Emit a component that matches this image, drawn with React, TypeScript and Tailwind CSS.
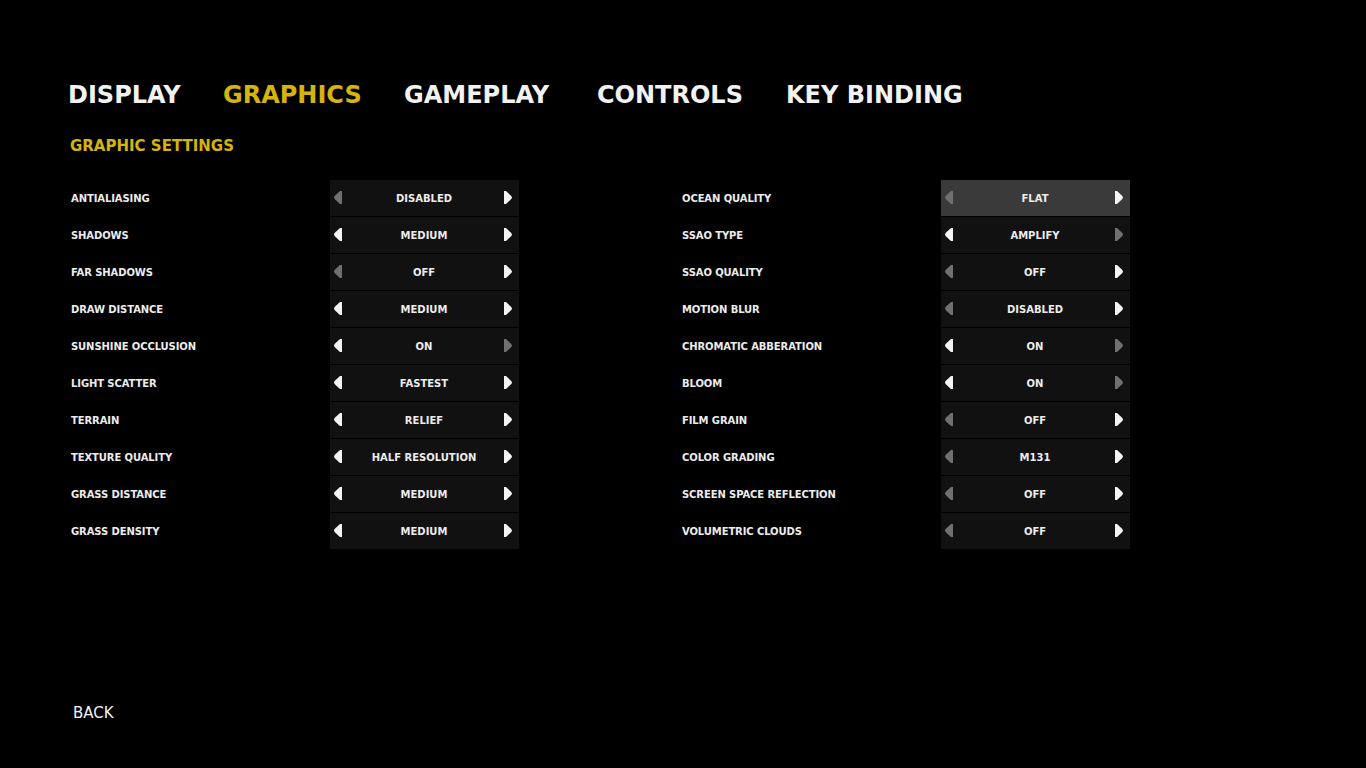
import React from "react";

type Row = { label: string; value: string; left: boolean; right: boolean; selected?: boolean };

const leftRows: Row[] = [
  { label: "ANTIALIASING", value: "DISABLED", left: false, right: true },
  { label: "SHADOWS", value: "MEDIUM", left: true, right: true },
  { label: "FAR SHADOWS", value: "OFF", left: false, right: true },
  { label: "DRAW DISTANCE", value: "MEDIUM", left: true, right: true },
  { label: "SUNSHINE OCCLUSION", value: "ON", left: true, right: false },
  { label: "LIGHT SCATTER", value: "FASTEST", left: true, right: true },
  { label: "TERRAIN", value: "RELIEF", left: true, right: true },
  { label: "TEXTURE QUALITY", value: "HALF RESOLUTION", left: true, right: true },
  { label: "GRASS DISTANCE", value: "MEDIUM", left: true, right: true },
  { label: "GRASS DENSITY", value: "MEDIUM", left: true, right: true },
];

const rightRows: Row[] = [
  { label: "OCEAN QUALITY", value: "FLAT", left: false, right: true, selected: true },
  { label: "SSAO TYPE", value: "AMPLIFY", left: true, right: false },
  { label: "SSAO QUALITY", value: "OFF", left: false, right: true },
  { label: "MOTION BLUR", value: "DISABLED", left: false, right: true },
  { label: "CHROMATIC ABBERATION", value: "ON", left: true, right: false },
  { label: "BLOOM", value: "ON", left: true, right: false },
  { label: "FILM GRAIN", value: "OFF", left: false, right: true },
  { label: "COLOR GRADING", value: "M131", left: false, right: true },
  { label: "SCREEN SPACE REFLECTION", value: "OFF", left: false, right: true },
  { label: "VOLUMETRIC CLOUDS", value: "OFF", left: false, right: true },
];

function Arrow({ dir, active }: { dir: "left" | "right"; active: boolean }) {
  const d =
    dir === "left"
      ? "M8 0 L8 13 L6 13 C3 10 0 8 0 6.5 C0 5 3 3 6 0 Z"
      : "M0 0 L0 13 L2 13 C5 10 8 8 8 6.5 C8 5 5 3 2 0 Z";
  return (
    <svg width="8" height="13" viewBox="0 0 8 13" className="shrink-0 -mt-[2px]">
      <path d={d} fill={active ? "#f4f4f4" : "#707070"} />
    </svg>
  );
}

function Column({ rows }: { rows: Row[] }) {
  return (
    <div className="flex flex-col gap-[1px]">
      {rows.map((r) => (
        <div key={r.label} className="flex items-center h-[36px]">
          <div className="w-[259px] text-[10px] font-bold text-[#ececec] leading-none tracking-[-0.1px] pt-[1px]">
            {r.label}
          </div>
          <div
            className={
              r.selected
                ? "w-[189px] h-full flex items-center pl-[4px] pr-[7px] bg-[#3a3a3a]"
                : "w-[189px] h-full flex items-center pl-[4px] pr-[7px] bg-[#111111]"
            }
          >
            <Arrow dir="left" active={r.left} />
            <div className="flex-1 text-center text-[10px] font-bold text-[#ececec] leading-none pl-[2px] pt-[1px]">
              {r.value}
            </div>
            <Arrow dir="right" active={r.right} />
          </div>
        </div>
      ))}
    </div>
  );
}

export default function App() {
  return (
    <div
      className="w-full h-[768px] bg-black overflow-hidden flex flex-col"
      style={{ fontFamily: '"DejaVu Sans", "Liberation Sans", sans-serif' }}
    >
      <div className="flex pl-[68px] pt-[81px] text-[24px] font-bold leading-[28px] text-[#f2f2f2]">
        <span className="w-[155px]">DISPLAY</span>
        <span className="w-[181px] text-[#d5b40b]">GRAPHICS</span>
        <span className="w-[193px]">GAMEPLAY</span>
        <span className="w-[189px]">CONTROLS</span>
        <span>KEY BINDING</span>
      </div>
      <div className="pl-[70px] mt-[27px] text-[15px] font-bold leading-[20px] text-[#d5b40b]">
        GRAPHIC SETTINGS
      </div>
      <div className="flex pl-[71px] mt-[24px] gap-[163px]">
        <Column rows={leftRows} />
        <Column rows={rightRows} />
      </div>
      <div className="flex-1" />
      <div className="pl-[73px] pb-[45px] text-[15px] leading-[20px] text-[#f2f2f2]">BACK</div>
    </div>
  );
}
